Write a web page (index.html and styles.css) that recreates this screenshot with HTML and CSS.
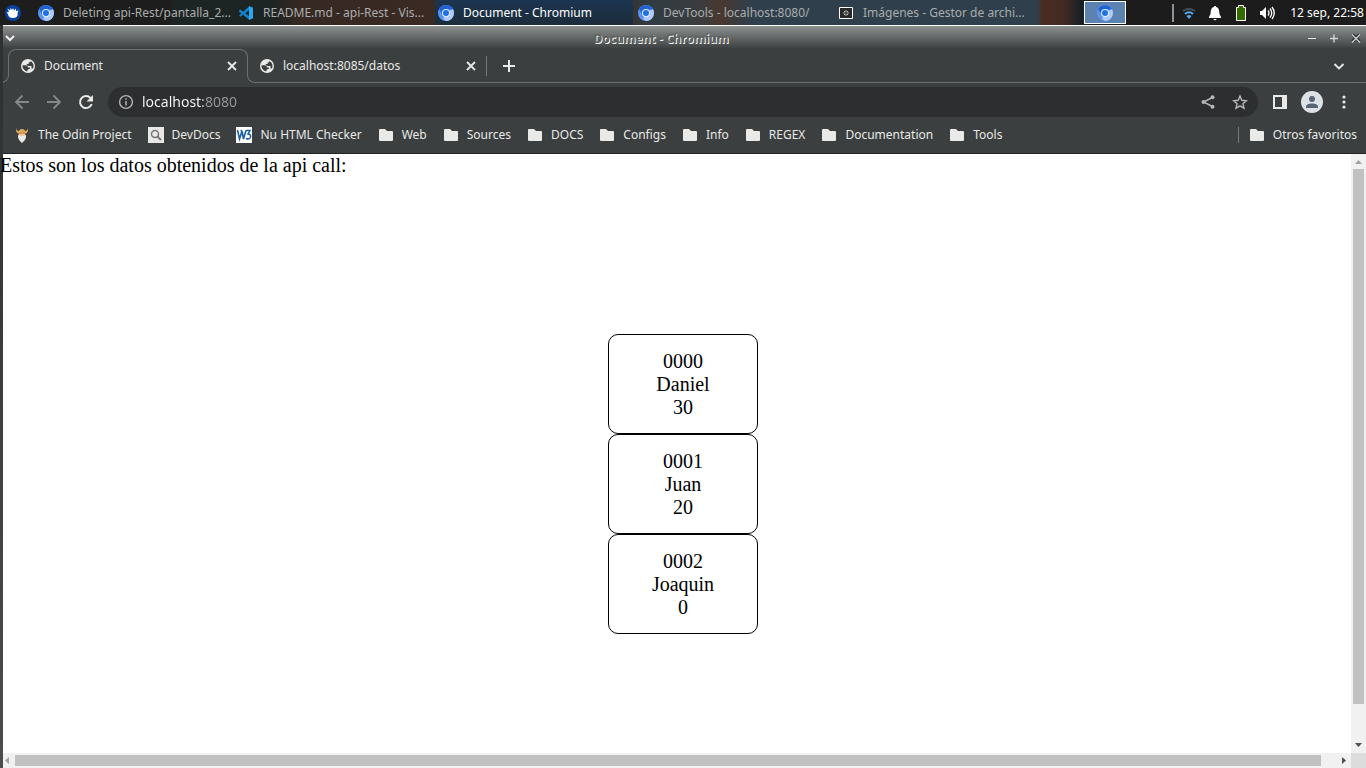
FILE: index.html
```html
<!DOCTYPE html>
<html lang="es">
<head>
<meta charset="utf-8">
<meta name="viewport" content="width=device-width, initial-scale=1">
<title>Document - Chromium</title>
<link rel="stylesheet" href="styles.css">
</head>
<body>
<svg class="defs" aria-hidden="true">
  <symbol id="chromium" viewBox="0 0 16 16">
    <circle cx="8" cy="8" r="8" fill="#5b93f0"/>
    <path d="M8 8 14.9 4A8 8 0 0 1 8 16l-3-2z" fill="#b0cbfa"/>
    <path d="M1.1 4A8 8 0 0 1 14.9 4.2L8 4.4 5 10z" fill="#1f63d6"/>
    <circle cx="8" cy="8" r="4" fill="#e4eefc"/>
    <circle cx="8" cy="8" r="3" fill="#1f72e6"/>
  </symbol>
  <symbol id="globe" viewBox="2 2 20 20">
    <path fill="currentColor" fill-rule="evenodd" d="M12 2a10 10 0 1 0 0 20 10 10 0 0 0 0-20zM4.200 11H9q3 .3 3 3h3v2q-4 0-4 3.800A8 8 0 0 1 4.200 11zM19 15.500h-2V12h-4q-3 0-3-3h3V6.500h2.500V4.800A8 8 0 0 1 19 15.500z"/>
  </symbol>
  <symbol id="folder" viewBox="0 0 16 16">
    <path fill="currentColor" d="M2 2h5l2 2h5a1 1 0 0 1 1 1v8a1 1 0 0 1-1 1H2a1 1 0 0 1-1-1V3a1 1 0 0 1 1-1z"/>
  </symbol>
  <symbol id="cross" viewBox="0 0 16 16">
    <path d="m4 4 8 8m0-8-8 8" fill="none" stroke="currentColor" stroke-width="1.800"/>
  </symbol>
</svg>

<header class="panel">
  <button class="menu" aria-label="Menú">
    <svg class="icon" viewBox="0 0 16 16"><circle cx="8" cy="8" r="8" fill="#07429f"/><path fill="#fff" d="m2.500 3.500 2.500 2 .5-2.500 1.500 2 1-2 1 2.500 2-2v2.500l2.500-.5-1 2.500q1 4.500-4 5-5 .5-5.500-4L1.500 7.500 4 7z"/></svg>
  </button>
  <nav class="tasks">
    <button class="task"><svg class="icon"><use href="#chromium"/></svg><span>Deleting api-Rest/pantalla_2...</span></button>
    <button class="task"><svg class="icon" viewBox="0 0 16 16"><path fill="#1383cc" d="M1 5.500 2.300 4.500 11.500 11.500V15L1 6.500z"/><path fill="#1383cc" d="M1 10.500 11.500 1v4L2.300 11.800z"/><path fill="#29a8f2" d="m11 1 4 1.800v10.500L11 15z"/></svg><span>README.md - api-Rest - Vis...</span></button>
    <button class="task task-active"><svg class="icon"><use href="#chromium"/></svg><span>Document - Chromium</span></button>
    <button class="task"><svg class="icon"><use href="#chromium"/></svg><span>DevTools - localhost:8080/</span></button>
    <button class="task"><svg class="icon" viewBox="0 0 16 16"><path fill="#292929" stroke="#fff" d="M1.500 2.500h13v11h-13z"/><path stroke="#bbb" d="M8 5v6M5 8h6M6 6l4 4m0-4-4 4"/><circle cx="8" cy="8" r="1" fill="#222"/></svg><span>Imágenes - Gestor de archi...</span></button>
  </nav>
  <button class="pager" aria-label="Área de trabajo 1"><svg class="icon"><use href="#chromium"/></svg></button>
  <div class="tray">
    <span class="tray-line"></span>
    <svg class="icon" viewBox="0 0 16 16"><path d="M2 6q6-4 12 0" fill="none" stroke="#435058" stroke-width="2"/><path d="M4 9q4-3.500 8 0" fill="none" stroke="#55acef" stroke-width="2"/><path d="m5.500 11 2.500 3 2.500-3q-2.500-2-5 0z" fill="#55acef"/></svg>
    <svg class="icon" viewBox="0 0 16 16"><path fill="#fff" d="M8 1c1 0 1 .6 1 1 3 .6 3 3 3.500 7L14 12v1H2v-1l1.500-3C4 5 4 2.600 7 2c0-.4 0-1 1-1zM6 14h4l-2 1.500z"/></svg>
    <svg class="icon" viewBox="0 0 16 16"><path fill="#336b00" stroke="#fff" d="M3.500 2.500h2v-2h5v2h2v13h-9z"/></svg>
    <svg class="icon" viewBox="0 0 16 16"><path fill="#fff" d="M1 6h2l4-4v12l-4-4H1z"/><path fill="none" stroke="#fff" stroke-width="1.300" d="M9 5.500q2 2.500 0 5M11 3.500q3.500 4.500 0 9M13 2q4.500 6 0 12"/></svg>
    <time class="clock">12 sep, 22:58</time>
  </div>
</header>

<div class="window">
  <div class="titlebar">
    <button class="wm" aria-label="Menú de ventana"><svg class="icon-wm" viewBox="0 0 12 12"><path d="m2 4 4 4 4-4" fill="none" stroke="#f2f2f2" stroke-width="2"/></svg></button>
    <h1 class="title">Document - Chromium</h1>
    <div class="wm-group">
      <button class="wm" aria-label="Minimizar"><svg class="icon-wm" viewBox="0 0 12 12"><path d="M2 6.500h8" stroke="#e8e8e8"/></svg></button>
      <button class="wm" aria-label="Maximizar"><svg class="icon-wm" viewBox="0 0 12 12"><path d="M2 6.500h8M6 2.500v8" stroke="#d4d4d4" stroke-width="1.400"/></svg></button>
      <button class="wm" aria-label="Cerrar"><svg class="icon-wm" viewBox="0 0 12 12"><path d="m2.500 2.500 7 7m0-7-7 7" stroke="#202424" stroke-width="3"/><path d="m2 2.500 8 8m0-8-8 8" stroke="#d4d4d4" stroke-width="1.400"/></svg></button>
    </div>
  </div>

  <div class="tabs">
    <div class="tab tab-active">
      <svg class="icon-tab"><use href="#globe"/></svg><span class="tab-name">Document</span>
      <button class="close" aria-label="Cerrar pestaña"><svg class="icon"><use href="#cross"/></svg></button>
      <span class="foot foot-left"></span><span class="foot foot-right"></span>
    </div>
    <div class="tabs-rest">
      <div class="tab">
        <svg class="icon-tab"><use href="#globe"/></svg><span class="tab-name">localhost:8085/datos</span>
        <button class="close" aria-label="Cerrar pestaña"><svg class="icon"><use href="#cross"/></svg></button>
      </div>
      <span class="tab-line"></span>
      <button class="new-tab" aria-label="Pestaña nueva"><svg class="icon" viewBox="0 0 16 16"><path d="M8 2v12M2 8h12" stroke="currentColor" stroke-width="2"/></svg></button>
      <button class="tab-search" aria-label="Buscar pestañas"><svg class="icon" viewBox="0 0 16 16"><path d="m3.500 6 4.500 4.500L12.500 6" fill="none" stroke="currentColor" stroke-width="1.800"/></svg></button>
    </div>
  </div>

  <div class="toolbar">
    <button class="nav dim" aria-label="Atrás"><svg class="icon" viewBox="0 0 16 16"><path d="M15 8H2m6.500-6.500L2 8l6.500 6.500" fill="none" stroke="currentColor" stroke-width="1.800"/></svg></button>
    <button class="nav dim" aria-label="Adelante"><svg class="icon" viewBox="0 0 16 16"><path d="M1 8h13M7.500 1.500 14 8l-6.500 6.500" fill="none" stroke="currentColor" stroke-width="1.800"/></svg></button>
    <button class="nav" aria-label="Recargar"><svg class="icon" viewBox="0 0 16 16"><path d="M12.500 4A6 6 0 1 0 13.700 10" fill="none" stroke="currentColor" stroke-width="2"/><path d="M15 1v6.500H8.500z" fill="currentColor"/></svg></button>
    <div class="omnibox">
      <svg class="icon" viewBox="0 0 16 16"><circle cx="8" cy="8" r="6.400" fill="none" stroke="currentColor" stroke-width="1.400"/><path d="M8 7v4.500M8 4.300v1.500" stroke="currentColor" stroke-width="1.500"/></svg>
      <input class="url" type="text" value="localhost:8080" aria-label="Dirección">
      <button class="nav" aria-label="Compartir"><svg class="icon" viewBox="0 0 16 16"><path d="M12.500 3.500 3.500 8l9 4.500" fill="none" stroke="currentColor" stroke-width="1.400"/><g fill="currentColor"><circle cx="12.500" cy="3.300" r="2"/><circle cx="3.500" cy="8" r="2"/><circle cx="12.500" cy="12.700" r="2"/></g></svg></button>
      <button class="nav" aria-label="Añadir a favoritos"><svg class="icon" viewBox="0 0 16 16"><path d="m8 2 1.800 4.300 4.600.4-3.500 3 1.100 4.500-4-2.400-4 2.400 1.100-4.500-3.500-3 4.600-.4z" fill="none" stroke="currentColor" stroke-width="1.400"/></svg></button>
    </div>
    <button class="nav" aria-label="Panel lateral"><svg class="icon" viewBox="0 0 16 16"><path d="M1 1h14v14H1zm2 2v10h7V3z" fill="currentColor" fill-rule="evenodd"/></svg></button>
    <button class="avatar" aria-label="Perfil"><svg class="icon-avatar" viewBox="0 0 22 22"><circle cx="11" cy="11" r="11" fill="#dee1e6"/><circle cx="11" cy="8" r="3" fill="#5a6478"/><path fill="#5a6478" d="M5 17v-1.500c0-2 3-3 6-3s6 1 6 3V17z"/></svg></button>
    <button class="nav" aria-label="Menú de Chromium"><svg class="icon" viewBox="0 0 16 16" fill="currentColor"><circle cx="8" cy="3" r="1.600"/><circle cx="8" cy="8" r="1.600"/><circle cx="8" cy="13" r="1.600"/></svg></button>
  </div>

  <nav class="bookmarks">
    <a class="bookmark" href="#"><svg class="icon" viewBox="0 0 16 16"><path fill="#e2b064" d="M2.500 0q-.5 4 2 4Q8 0 11.500 4q2.500 0 2-4 1.500 6-2.500 6.500H5Q1 6 2.500 0z"/><path fill="#d49648" d="M4.500 4.500h7v2.500h-7z"/><path fill="#f0c5a0" d="M5 7h6v3H5z"/><path fill="#eceae8" d="M4 7.500 6 9h4l2-1.500q.5 4-1.500 6L8 16l-2.500-2.500q-2-2-1.500-6z"/></svg>The Odin Project</a>
    <a class="bookmark" href="#"><svg class="icon" viewBox="0 0 16 16"><path fill="#e8e8e8" d="M0 0h16v16H0z"/><circle cx="7" cy="7" r="3.500" fill="none" stroke="#777" stroke-width="1.500"/><path d="m9.500 9.500 3.500 3.500" stroke="#777" stroke-width="2"/></svg>DevDocs</a>
    <a class="bookmark" href="#"><svg class="icon" viewBox="0 0 16 16"><path fill="#fff" d="M0 0h16v16H0z"/><path d="m1.500 3 2 9L6 4l1.500 8L10 3.500M4.500 3.500H6" fill="none" stroke="#175ea5" stroke-width="1.600"/><path d="M10 3.500h4L12 7q3 0 2.500 3-.5 3-4.500 1.500" fill="none" stroke="#175ea5" stroke-width="1.500"/></svg>Nu HTML Checker</a>
    <a class="bookmark" href="#"><svg class="icon"><use href="#folder"/></svg>Web</a>
    <a class="bookmark" href="#"><svg class="icon"><use href="#folder"/></svg>Sources</a>
    <a class="bookmark" href="#"><svg class="icon"><use href="#folder"/></svg>DOCS</a>
    <a class="bookmark" href="#"><svg class="icon"><use href="#folder"/></svg>Configs</a>
    <a class="bookmark" href="#"><svg class="icon"><use href="#folder"/></svg>Info</a>
    <a class="bookmark" href="#"><svg class="icon"><use href="#folder"/></svg>REGEX</a>
    <a class="bookmark" href="#"><svg class="icon"><use href="#folder"/></svg>Documentation</a>
    <a class="bookmark" href="#"><svg class="icon"><use href="#folder"/></svg>Tools</a>
    <a class="bookmark others" href="#"><svg class="icon"><use href="#folder"/></svg>Otros favoritos</a>
  </nav>

  <div class="viewport">
    <main class="page">
      <p class="intro">Estos son los datos obtenidos de la api call:</p>
      <section class="cards">
        <article class="card"><p>0000</p><p>Daniel</p><p>30</p></article>
        <article class="card"><p>0001</p><p>Juan</p><p>20</p></article>
        <article class="card"><p>0002</p><p>Joaquin</p><p>0</p></article>
      </section>
    </main>
    <div class="bar bar-y" aria-hidden="true">
      <svg class="arrow" viewBox="0 0 15 15"><path fill="#a3a3a3" d="m4 10 3.500-4L11 10z"/></svg>
      <span class="track"><span class="thumb"></span></span>
      <svg class="arrow" viewBox="0 0 15 15"><path fill="#505050" d="m4 5 3.500 4L11 5z"/></svg>
    </div>
    <div class="bar bar-x" aria-hidden="true">
      <svg class="arrow arrow-left" viewBox="0 0 12 15"><path fill="#a3a3a3" d="M6 4 2 7.500 6 11z"/></svg>
      <span class="track"><span class="thumb"></span></span>
      <svg class="arrow" viewBox="0 0 15 15"><path fill="#505050" d="m6 4 4 3.500L6 11z"/></svg>
    </div>
    <div class="corner"></div>
  </div>
</div>
</body>
</html>
```
FILE: styles.css
```css
* { box-sizing: border-box; }

body {
  margin: 0;
  height: 100vh;
  display: flex;
  flex-direction: column;
  overflow: hidden;
  background: #1d1d1d;
  font: 12px/16px "Noto Sans", sans-serif;
  color: #e9e9e7;
}

button {
  display: flex;
  align-items: center;
  justify-content: center;
  border: 0;
  padding: 0;
  background: none;
  color: inherit;
  font: inherit;
}

svg { display: block; flex: none; }
.defs { position: absolute; width: 0; height: 0; }
.icon { width: 16px; height: 16px; }
.icon-tab { width: 14px; height: 14px; }
.icon-wm { width: 12px; height: 12px; }
.icon-avatar { width: 22px; height: 22px; }

/* Desktop panel */
.panel {
  display: flex;
  align-items: center;
  height: 25px;
  flex: none;
  padding: 0 2px 0 5px;
  background: linear-gradient(90deg, #1d1d1d 0 170px, #1d2424 172px 270px, #362823 300px, #3b2a24 430px, #333 630px, #303c43 650px, #3a3c3e 700px, #4a3830 720px, #2f3f4b 750px 1038px, #4a2c22 1042px, #422b22 1064px, #1b2026 1080px, #1c1c1c 1090px);
}
.tasks { display: flex; align-self: stretch; flex: 1; padding-left: 14px; }
.task {
  flex: 0 1 200px;
  min-width: 0;
  justify-content: flex-start;
  gap: 9px;
  padding-left: 3px;
  color: #aaadad;
  white-space: nowrap;
}
.task-active {
  border-radius: 3px;
  background: linear-gradient(#1b3550, #1c2c3b);
  background-size: 198px 100%;
  background-repeat: no-repeat;
  color: #fff;
}
.pager { width: 42px; height: 23px; border: 1px solid #fff; background: #5b82b0; }
.tray { display: flex; align-items: center; gap: 10px; margin-left: 46px; }
.tray-line { width: 2px; height: 18px; margin-right: -3px; background: #8b9199; }
.clock { margin-left: 5px; color: #fff; white-space: nowrap; }

/* Browser window */
.window {
  flex: 1;
  min-height: 0;
  display: flex;
  flex-direction: column;
  padding-left: 3px;
  background: linear-gradient(#2d2f30, #4c4c4c);
}
.titlebar, .tabs, .toolbar, .bookmarks { background: #3b3f40; }
.titlebar {
  display: flex;
  align-items: center;
  height: 24px;
  flex: none;
  padding: 1px 4px 0 1px;
  border-top: 1px solid #fff;
  background: linear-gradient(#8c908f, #3b3f40);
}
.title {
  flex: 1;
  margin: 0;
  padding-top: 1px;
  font: bold 12px/16px "Noto Sans", sans-serif;
  text-align: center;
  color: #5d6160;
  text-shadow: 1px 1px #f4f4f0;
}
.wm-group { display: flex; gap: 10px; }

/* Tabs */
.tabs { display: flex; height: 34px; flex: none; padding-left: 5px; overflow: hidden; }
.tab { display: flex; align-items: center; gap: 9px; padding: 0 8px 0 13px; }
.tab-name { flex: 1; }
.tab-active { position: relative; width: 240px; margin-right: 8px; }
.tab-active::before {
  content: "";
  position: absolute;
  inset: 0 0 8px;
  border: 1px solid #6c7071;
  border-bottom: 0;
  border-radius: 8px 8px 0 0;
}
.foot { position: absolute; bottom: 0; width: 9px; height: 8px; border: solid #6c7071; }
.foot-left { right: calc(100% - 1px); border-width: 0 1px 1px 0; border-radius: 0 0 8px; }
.foot-right { left: calc(100% - 1px); border-width: 0 0 1px 1px; border-radius: 0 0 0 8px; }
.tabs-rest { flex: 1; display: flex; align-items: center; border-bottom: 1px solid #6c7071; }
.tabs-rest .tab { width: 230px; padding: 0 7px 0 4px; }
.tab-line { width: 1px; height: 20px; background: #777b7c; }
.new-tab { margin-left: 14px; }
.tab-search { margin: 0 19px 0 auto; }

/* Toolbar */
.toolbar { display: flex; align-items: center; gap: 16px; height: 38px; flex: none; padding: 0 14px 0 11px; }
.dim { color: #858888; }
.omnibox {
  flex: 1;
  display: flex;
  align-items: center;
  gap: 16px;
  height: 30px;
  margin-left: -2px;
  margin-right: -2px;
  padding: 0 10px;
  border-radius: 15px;
  background: #2c2e30;
  color: #b4b6b8;
}
.url {
  flex: 1;
  min-width: 0;
  margin-left: -8px;
  border: 0;
  padding: 0;
  outline: 0;
  font: 14px/20px "Noto Sans", sans-serif;
  background: linear-gradient(90deg, #fff 61px, #96999b 61px);
  -webkit-background-clip: text;
  background-clip: text;
  color: transparent;
}
.avatar { margin: 0 -3px; }

/* Bookmarks */
.bookmarks {
  display: flex;
  align-items: center;
  gap: 16px;
  height: 33px;
  flex: none;
  padding: 0 9px 5px 11px;
  border-bottom: 1px solid #202122;
}
.bookmark { display: flex; align-items: center; gap: 8px; color: inherit; text-decoration: none; white-space: nowrap; }
.others { margin-left: auto; padding-left: 10px; border-left: 1px solid #777b7c; }

/* Page area */
.viewport {
  flex: 1;
  min-height: 0;
  display: grid;
  grid-template: minmax(0, 1fr) 15px / minmax(0, 1fr) 15px;
  background: #fff;
}
.page {
  margin: 0 -15px 0 -3px;
  color: #000;
  font: 20px/23px "Liberation Serif", serif;
}
.page p { margin: 0; }
.cards { display: flex; flex-direction: column; align-items: center; padding-top: 157px; }
.card {
  display: flex;
  flex-direction: column;
  align-items: center;
  justify-content: center;
  width: 150px;
  height: 100px;
  border: 1px solid #000;
  border-radius: 10px;
}

/* Scrollbars */
.bar { display: flex; position: relative; background: #f1f1f1; }
.bar-y { flex-direction: column; }
.arrow { width: 15px; height: 15px; }
.arrow-left { width: 12px; }
.track { flex: 1; display: flex; }
.thumb { background: #c1c1c1; }
.bar-y .thumb { width: 11px; height: 94%; margin-left: 2px; }
.bar-x .thumb { flex: 1; height: 11px; margin: 2px 15px 0 0; }
.corner { background: #dcdcdc; }
```
